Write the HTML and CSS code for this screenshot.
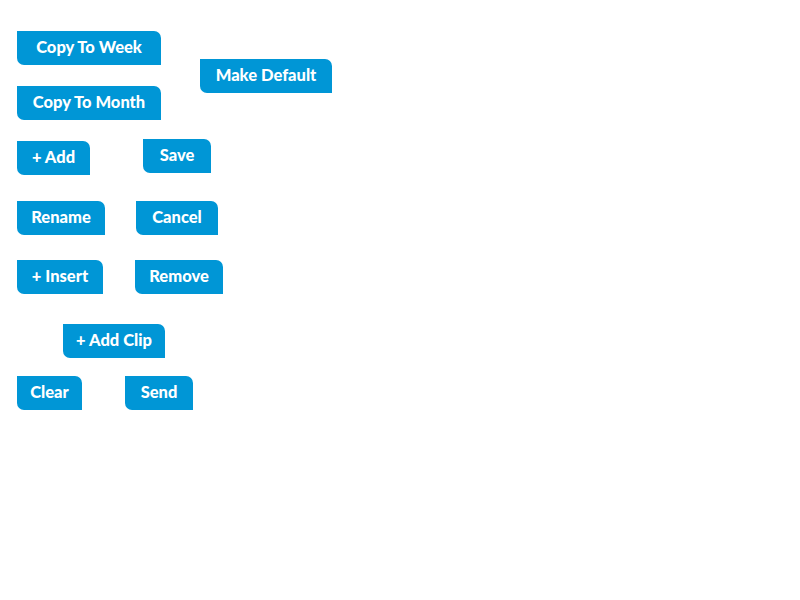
FILE: index.html
```html
<!DOCTYPE html>
<html>
<head>
<meta charset="utf-8">
<link rel="stylesheet" href="styles.css">
</head>
<body>
<div class="page">
  <div class="row row-a">
    <div class="stack">
      <button class="btn w-week">Copy To Week</button>
      <button class="btn w-month">Copy To Month</button>
    </div>
    <button class="btn w-default">Make Default</button>
  </div>
  <div class="row row-b">
    <button class="btn w-add">+ Add</button>
    <button class="btn w-save">Save</button>
  </div>
  <div class="row row-c">
    <button class="btn w-rename">Rename</button>
    <button class="btn w-cancel">Cancel</button>
  </div>
  <div class="row row-d">
    <button class="btn w-insert">+ Insert</button>
    <button class="btn w-remove">Remove</button>
  </div>
  <div class="row row-e">
    <button class="btn w-clip">+ Add Clip</button>
  </div>
  <div class="row row-f">
    <button class="btn w-clear">Clear</button>
    <button class="btn w-send">Send</button>
  </div>
</div>
</body>
</html>
```
FILE: styles.css
```css
html, body {
  margin: 0;
  padding: 0;
  background: #ffffff;
}
.page {
  display: flex;
  flex-direction: column;
  align-items: flex-start;
  padding: 31px 0 0 17px;
}
.row {
  display: flex;
  align-items: flex-start;
}
.stack {
  display: flex;
  flex-direction: column;
  gap: 21px;
}
.btn {
  display: block;
  box-sizing: border-box;
  height: 34px;
  margin: 0;
  padding: 0 0 1px 0;
  border: none;
  background: #0096d6;
  color: #ffffff;
  font-family: Lato, "Open Sans", sans-serif;
  font-weight: 900;
  font-size: 16.5px;
  line-height: 33px;
  text-align: center;
  border-radius: 0 7px 0 7px;
}
.w-week, .w-month { width: 144px; }
.w-default { width: 132px; margin: 28px 0 0 39px; }
.row-b { margin-top: 19px; }
.w-add { width: 73px; margin-top: 2px; }
.w-save { width: 68px; margin-left: 53px; }
.row-c { margin-top: 26px; }
.w-rename { width: 88px; }
.w-cancel { width: 82px; margin-left: 31px; }
.row-d { margin-top: 25px; }
.w-insert { width: 86px; }
.w-remove { width: 88px; margin-left: 32px; }
.row-e { margin-top: 30px; }
.w-clip { width: 102px; margin-left: 46px; }
.row-f { margin-top: 18px; }
.w-clear { width: 65px; }
.w-send { width: 68px; margin-left: 43px; }
```
